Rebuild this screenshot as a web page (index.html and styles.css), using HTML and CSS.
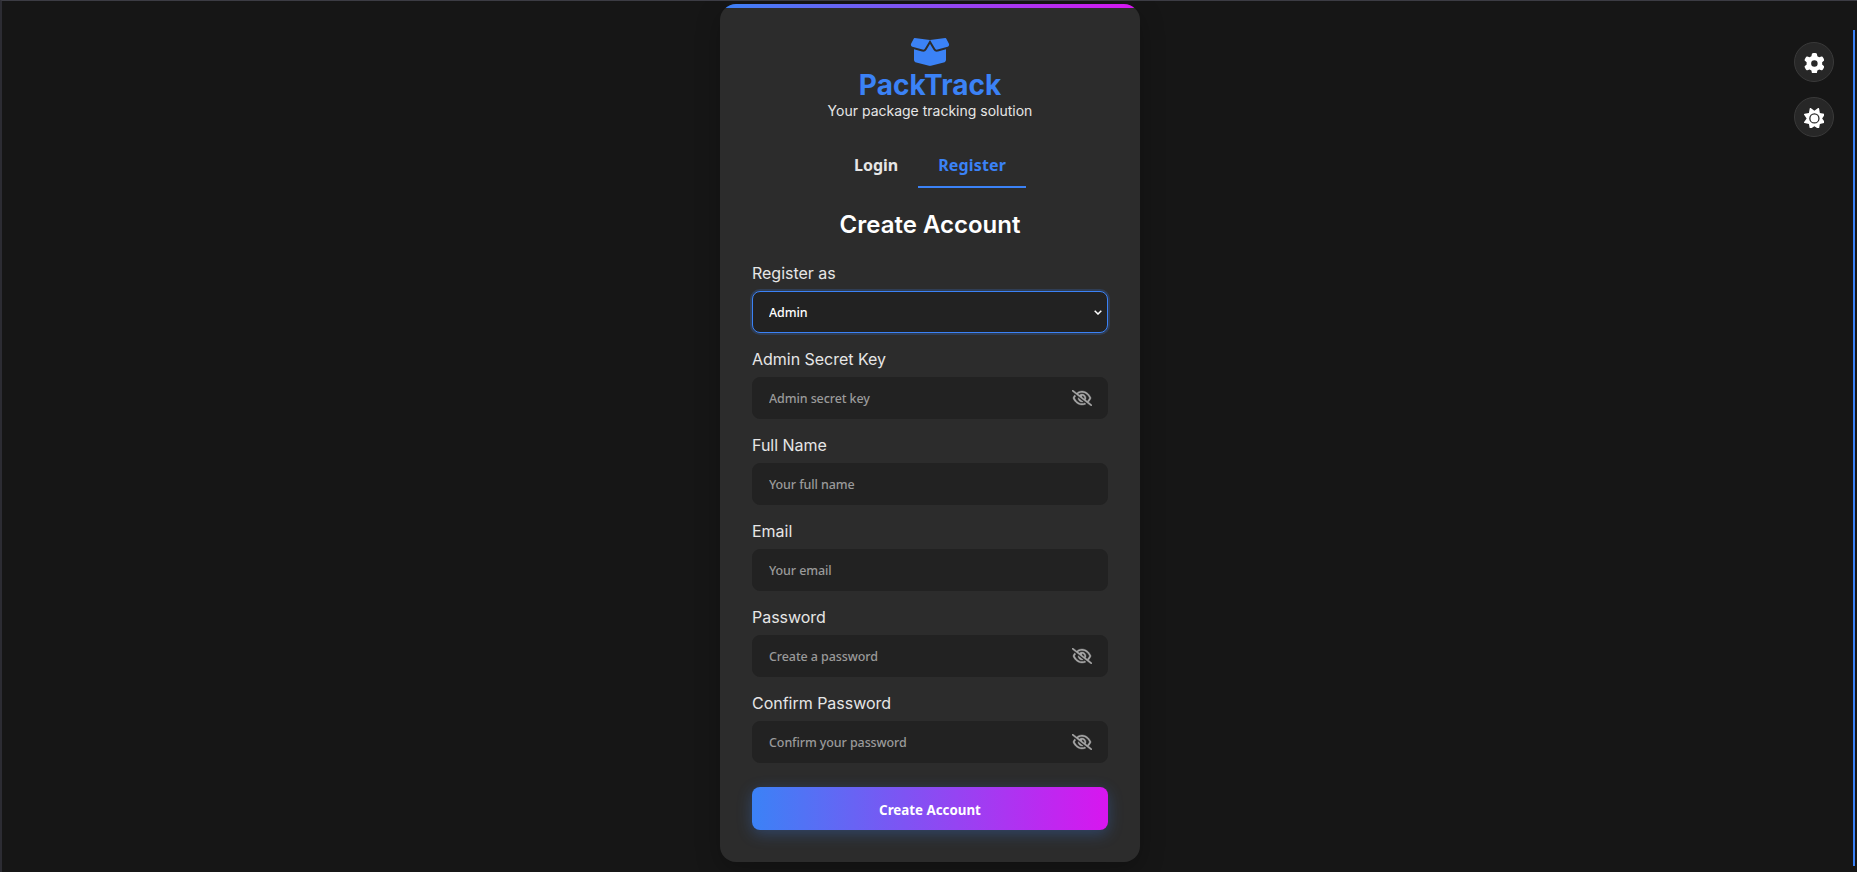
FILE: index.html
```html
<!DOCTYPE html>
<html lang="en">
<head>
<meta charset="utf-8">
<title>PackTrack</title>
<link rel="stylesheet" href="styles.css">
</head>
<body>
<svg class="sprite" aria-hidden="true">
  <symbol id="eye-slash" viewBox="0 0 640 512"><path d="M38.8 5.1C28.4-3.1 13.3-1.2 5.1 9.2S-1.2 34.7 9.2 42.9l592 464c10.4 8.2 25.5 6.3 33.7-4.1s6.3-25.5-4.1-33.7L525.6 386.7c39.6-40.6 66.4-86.1 79.9-118.4c3.3-7.9 3.3-16.7 0-24.6c-14.9-35.7-46.2-87.7-93-131.1C465.5 68.8 400.8 32 320 32c-68.2 0-125 26.3-169.3 60.8L38.8 5.1zm151 118.3C226 97.7 269.5 80 320 80c65.2 0 118.8 29.6 159.9 67.7C518.4 183.5 545 226 558.6 256c-12.6 28-36.6 66.8-70.9 100.9l-53.8-42.2c9.1-17.6 14.2-37.5 14.2-58.7c0-70.7-57.3-128-128-128c-32.2 0-61.7 11.9-84.2 31.5l-46.1-36.1zM394.9 284.2l-81.5-63.9c4.2-8.5 6.6-18.2 6.6-28.3c0-5.5-.7-10.9-2-16c.7 0 1.3 0 2 0c44.2 0 80 35.8 80 80c0 9.9-1.8 19.4-5.1 28.2zm9.4 130.3C378.8 425.4 350.7 432 320 432c-65.2 0-118.8-29.6-159.9-67.7C121.6 328.5 95 286 81.4 256c8.3-18.4 21.5-41.5 39.4-64.8L83.1 161.5C60.3 191.2 44 220.8 34.5 243.7c-3.3 7.9-3.3 16.7 0 24.6c14.9 35.7 46.2 87.7 93 131.1C174.5 443.2 239.2 480 320 480c47.8 0 89.9-12.9 126.2-32.5l-41.9-33zM192 256c0 70.7 57.3 128 128 128c13.3 0 26.1-2 38.2-5.8L302 334c-23.5-5.4-43.1-21.2-53.7-42.3l-56.1-44.2c-.2 2.8-.3 5.6-.3 8.5z"/></symbol>
</svg>
<main class="page">
  <section class="card">
    <header class="brand">
      <svg class="brand-icon" viewBox="0 0 640 512"><path d="M58.9 42.1c3-6.1 9.6-9.6 16.3-8.7L320 64 564.8 33.4c6.7-.8 13.3 2.7 16.3 8.7l41.7 83.4c9 17.9-.6 39.6-19.8 45.1L439.6 217.3c-13.9 4-28.8-1.9-36.2-14.3L320 64 236.6 203c-7.4 12.4-22.3 18.3-36.2 14.3L37.1 170.6c-19.3-5.5-28.8-27.2-19.8-45.1L58.9 42.1zM321.1 128l54.9 91.4c14.9 24.8 44.6 36.6 72.5 28.6L576 211.6v167c0 22-15 41.2-36.4 46.6l-204.1 51c-10.2 2.6-20.9 2.6-31 0l-204.1-51C79 419.7 64 400.5 64 378.5v-167L191.6 248c27.8 8 57.6-3.8 72.5-28.6L318.9 128h2.2z"/></svg>
      <h1 class="brand-name">PackTrack</h1>
      <p class="brand-tagline">Your package tracking solution</p>
    </header>
    <nav class="tabs">
      <button class="tab" type="button">Login</button>
      <button class="tab tab-active" type="button">Register</button>
    </nav>
    <h2 class="form-title">Create Account</h2>
    <form class="form">
      <div class="field">
        <label class="label" for="role">Register as</label>
        <div class="control control-focus">
          <select class="input" id="role"><option>Admin</option></select>
          <svg class="chevron" viewBox="0 0 8 5"><path d="M.7.7 4 4 7.3.7"/></svg>
        </div>
      </div>
      <div class="field">
        <label class="label" for="key">Admin Secret Key</label>
        <div class="control">
          <input class="input" id="key" type="password" placeholder="Admin secret key">
          <svg class="eye"><use href="#eye-slash"/></svg>
        </div>
      </div>
      <div class="field">
        <label class="label" for="name">Full Name</label>
        <div class="control"><input class="input" id="name" type="text" placeholder="Your full name"></div>
      </div>
      <div class="field">
        <label class="label" for="email">Email</label>
        <div class="control"><input class="input" id="email" type="email" placeholder="Your email"></div>
      </div>
      <div class="field">
        <label class="label" for="password">Password</label>
        <div class="control">
          <input class="input" id="password" type="password" placeholder="Create a password">
          <svg class="eye"><use href="#eye-slash"/></svg>
        </div>
      </div>
      <div class="field">
        <label class="label" for="confirm">Confirm Password</label>
        <div class="control">
          <input class="input" id="confirm" type="password" placeholder="Confirm your password">
          <svg class="eye"><use href="#eye-slash"/></svg>
        </div>
      </div>
      <button class="submit" type="button">Create Account</button>
    </form>
  </section>
</main>
<aside class="tools">
  <button class="tool" type="button" aria-label="Settings"><svg class="tool-icon" viewBox="0 0 512 512"><path d="M495.9 166.6c3.2 8.7 .5 18.4-6.4 24.6l-43.3 39.4c1.1 8.3 1.7 16.8 1.7 25.4s-.6 17.1-1.7 25.4l43.3 39.4c6.9 6.2 9.6 15.9 6.4 24.6c-4.4 11.9-9.7 23.3-15.8 34.3l-4.7 8.1c-6.6 11-14 21.4-22.1 31.2c-5.9 7.2-15.7 9.6-24.5 6.8l-55.7-17.7c-13.4 10.3-28.2 18.9-44 25.4l-12.5 57.1c-2 9.1-9 16.3-18.2 17.8c-13.8 2.3-28 3.5-42.5 3.5s-28.7-1.2-42.5-3.5c-9.2-1.5-16.2-8.7-18.2-17.8l-12.5-57.1c-15.8-6.5-30.6-15.1-44-25.4L83.1 425.9c-8.8 2.8-18.6 .3-24.5-6.8c-8.1-9.8-15.5-20.2-22.1-31.2l-4.7-8.1c-6.1-11-11.4-22.4-15.8-34.3c-3.2-8.7-.5-18.4 6.4-24.6l43.3-39.4C64.6 273.1 64 264.6 64 256s.6-17.1 1.7-25.4L22.4 191.2c-6.9-6.2-9.6-15.9-6.4-24.6c4.4-11.9 9.7-23.3 15.8-34.3l4.7-8.1c6.6-11 14-21.4 22.1-31.2c5.9-7.2 15.7-9.6 24.5-6.8l55.7 17.7c13.4-10.3 28.2-18.9 44-25.4l12.5-57.1c2-9.1 9-16.3 18.2-17.8C227.3 1.2 241.5 0 256 0s28.7 1.2 42.5 3.5c9.2 1.5 16.2 8.7 18.2 17.8l12.5 57.1c15.8 6.5 30.6 15.1 44 25.4l55.7-17.7c8.8-2.8 18.6-.3 24.5 6.8c8.1 9.8 15.5 20.2 22.1 31.2l4.7 8.1c6.1 11 11.4 22.4 15.8 34.3zM256 336a80 80 0 1 0 0-160 80 80 0 1 0 0 160z"/></svg></button>
  <button class="tool" type="button" aria-label="Theme"><svg class="tool-icon" viewBox="0 0 512 512"><path d="M361.5 1.2c5 2.1 8.6 6.6 9.6 11.9L391 121l107.9 19.8c5.3 1 9.8 4.6 11.9 9.6s1.5 10.7-1.6 15.2L446.9 256l62.3 90.3c3.1 4.5 3.7 10.2 1.6 15.2s-6.6 8.6-11.9 9.6L391 391 371.1 498.9c-1 5.3-4.6 9.8-9.6 11.9s-10.7 1.5-15.2-1.6L256 446.9l-90.3 62.3c-4.5 3.1-10.2 3.7-15.2 1.6s-8.6-6.6-9.6-11.9L121 391 13.1 371.1c-5.3-1-9.8-4.6-11.9-9.6s-1.5-10.7 1.6-15.2L65.1 256 2.8 165.7c-3.1-4.5-3.7-10.2-1.6-15.2s6.6-8.6 11.9-9.6L121 121 140.9 13.1c1-5.3 4.6-9.8 9.6-11.9s10.7-1.5 15.2 1.6L256 65.1 346.3 2.8c4.5-3.1 10.2-3.7 15.2-1.6zM160 256a96 96 0 1 1 192 0 96 96 0 1 1 -192 0zm224 0a128 128 0 1 0 -256 0 128 128 0 1 0 256 0z"/></svg></button>
</aside>
<div class="scroll-thumb"></div>
</body>
</html>
```
FILE: styles.css
```css
* { box-sizing: border-box; margin: 0; padding: 0; }
body {
  height: 872px;
  overflow: hidden;
  background: #161616;
  border-top: 1px solid #3c3c44;
  border-left: 2px solid #2c2c33;
  font-family: Inter, sans-serif;
  color: #e6e6e6;
}
button, input, select { font-family: "Noto Sans", sans-serif; border: 0; outline: 0; }
.sprite { display: none; }
.page { display: flex; justify-content: center; padding: 3px 0 0 1px; }
.card {
  width: 420px;
  height: 858px;
  padding: 32px;
  display: flex;
  flex-direction: column;
  border-radius: 16px;
  background: linear-gradient(90deg, #3b82f6, #d816ef) top / 100% 4px no-repeat #2c2c2c;
  box-shadow: 0 8px 24px rgba(0, 0, 0, .25);
}
.brand { display: flex; flex-direction: column; align-items: center; }
.brand-icon { width: 40px; height: 32px; fill: #3b82f6; }
.brand-name { font-size: 28px; line-height: 34px; font-weight: 700; color: #3b82f6; }
.brand-tagline { font-size: 14px; line-height: 17px; }
.tabs { display: flex; justify-content: center; margin-top: 24px; }
.tab {
  height: 45px;
  padding: 1px 20px 0;
  background: none;
  border-bottom: 2px solid transparent;
  font-size: 16px;
  font-weight: 700;
  color: #e6e6e6;
}
.tab-active { color: #3b82f6; border-bottom-color: #3b82f6; letter-spacing: .15px; }
.form-title { margin-top: 22px; font-size: 24px; line-height: 30px; font-weight: 600; text-align: center; color: #fff; }
.form { display: flex; flex-direction: column; gap: 16px; margin-top: 23px; }
.field { display: flex; flex-direction: column; gap: 8px; }
.label { font-size: 16px; line-height: 20px; letter-spacing: -.02px; }
.control {
  display: flex;
  align-items: center;
  height: 42px;
  border-radius: 8px;
  background: #222;
  border: 1px solid #222;
}
.control-focus { border-color: #3b82f6; box-shadow: 0 0 0 2px rgba(59, 130, 246, .2); }
.input {
  flex: 1;
  height: 40px;
  padding: 0 16px;
  background: transparent;
  color: #fff;
  font-size: 12.5px;
  font-weight: 500;
  letter-spacing: -.1px;
  appearance: none;
}
.input::placeholder { color: #9a9a9a; }
.chevron { width: 8px; height: 5px; margin-right: 5px; fill: none; stroke: #fff; stroke-width: 1.5; }
.eye { width: 20px; height: 16px; margin-right: 15px; fill: #a8a8a8; stroke: #a8a8a8; stroke-width: 12; overflow: visible; }
.submit {
  height: 43px;
  margin-top: 8px;
  padding-top: 2px;
  border-radius: 8px;
  background: linear-gradient(90deg, #3b82f6, #d816ef);
  box-shadow: 0 4px 15px rgba(59, 130, 246, .3);
  color: #fff;
  font-size: 13.33px;
  font-weight: 700;
}
.tools { position: fixed; top: 42px; right: 23px; display: flex; flex-direction: column; gap: 15px; }
.tool {
  display: flex;
  align-items: center;
  justify-content: center;
  width: 40px;
  height: 40px;
  padding-top: 2px;
  border: 1px solid #3a3a3a;
  border-radius: 50%;
  background: #272727;
}
.tool-icon { width: 20.8px; height: 20.8px; fill: #fff; }
.scroll-thumb { position: fixed; top: 30px; right: 2px; width: 2px; height: 836px; background: #3b82f6; }
```
